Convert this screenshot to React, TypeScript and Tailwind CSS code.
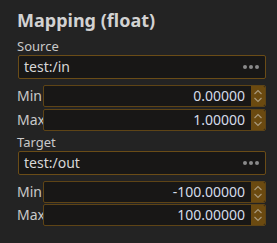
import type { ReactNode } from "react";

const font = { fontFamily: '"Noto Sans", "Open Sans", sans-serif' };

function PathField({ value }: { value: string }) {
  return (
    <div className="ml-[1px] flex h-[24px] w-[248px] items-center justify-between rounded-[2px] border border-[#6a4c17] bg-[#181716] pl-[5px] pr-[6px]">
      <span className="text-[14px] leading-none text-[#d6d6d6]">{value}</span>
      <span className="flex gap-[2px]">
        <span className="h-[4px] w-[4px] rounded-full bg-[#8a8a8a]" />
        <span className="h-[4px] w-[4px] rounded-full bg-[#8a8a8a]" />
        <span className="h-[4px] w-[4px] rounded-full bg-[#8a8a8a]" />
      </span>
    </div>
  );
}

function Spinner() {
  return (
    <div className="flex h-full w-[14px] items-center justify-center rounded-r-[2px] bg-[#6b4a10]">
      <svg width="10" height="16" viewBox="0 0 10 16" fill="none" stroke="#a8987a" strokeWidth="1.2">
        <path d="M1.5 6 L5 2.5 L8.5 6" />
        <path d="M1.5 10 L5 13.5 L8.5 10" />
      </svg>
    </div>
  );
}

function NumberRow({ label, value, className = "" }: { label: string; value: string; className?: string }) {
  return (
    <div className={`flex h-[22px] items-center ${className}`}>
      <span className="w-[26px] text-[14px] leading-none text-[#c9c9c9]">{label}</span>
      <div className="flex h-full w-[223px] rounded-[2px] border border-[#5e4416] bg-[#181716]">
        <div className="flex flex-1 items-center justify-end pr-[6px] text-[14px] leading-none text-[#d4dcea]">{value}</div>
        <Spinner />
      </div>
    </div>
  );
}

function Label({ children, className = "" }: { children: ReactNode; className?: string }) {
  return <div className={`text-[13px] leading-[14px] text-[#c9c9c9] ${className}`}>{children}</div>;
}

export default function App() {
  return (
    <div className="h-[243px] w-[277px] bg-[#232323] pl-[17px] pt-[9px]" style={font}>
      <div className="text-[18px] font-bold leading-[22px] text-[#d2d2d2]">Mapping (float)</div>
      <Label className="mt-[8px]">Source</Label>
      <div className="mt-[2px]">
        <PathField value="test:/in" />
      </div>
      <NumberRow label="Min" value="0.00000" className="mt-[6px]" />
      <NumberRow label="Max" value="1.00000" className="mt-[2px]" />
      <Label className="mt-[4px]">Target</Label>
      <div className="mt-[2px]">
        <PathField value="test:/out" />
      </div>
      <NumberRow label="Min" value="-100.00000" className="mt-[6px]" />
      <NumberRow label="Max" value="100.00000" className="mt-[1px]" />
    </div>
  );
}
